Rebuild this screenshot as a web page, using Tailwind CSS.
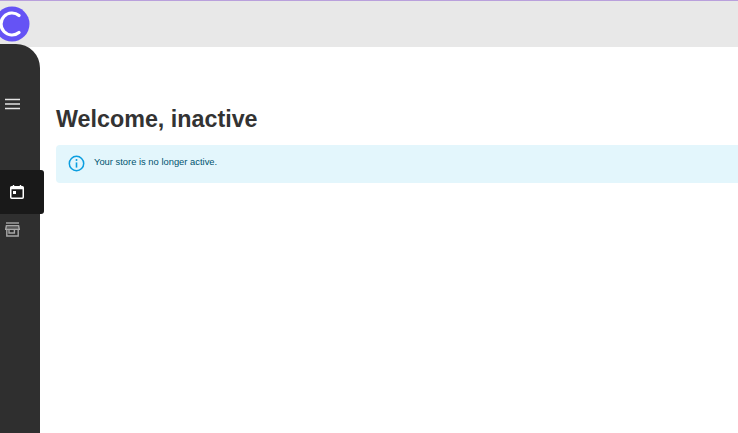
<!DOCTYPE html>
<html lang="en">

<head>
  <meta charset="UTF-8">
  <meta name="viewport" content="width=device-width, initial-scale=1.0">
  <title>Welcome</title>
  <script src="https://cdn.jsdelivr.net/npm/@tailwindcss/browser@4"></script>
</head>

<body class="bg-white h-[433px] overflow-hidden font-['Liberation_Sans',Arial,sans-serif]">
  <!-- top bar -->
  <header class="h-[47px] bg-[#e8e8e8] border-t border-[#b9a0dc] relative">
    <svg class="absolute left-[-6px] top-[5px]" width="36" height="36" viewBox="0 0 36 36">
      <circle cx="18" cy="18" r="17.5" fill="#6553f5" />
      <path d="M25 9.5 A11 11 0 1 0 25 26.5" fill="none" stroke="white" stroke-width="3.2" stroke-linecap="round" />
    </svg>
  </header>

  <div class="flex h-[386px]">
    <!-- sidebar -->
    <aside class="relative w-10 h-[389px] -mt-[3px] bg-[#2f2f2f] rounded-tr-[24px] shrink-0">
      <div class="absolute left-[5px] top-[54px]">
        <svg class="block" width="15" height="12" viewBox="0 0 15 12" fill="none" stroke="#e4e4e4" stroke-width="1.5">
          <path d="M0 1.5H15M0 6H15M0 10.5H15" />
        </svg>
      </div>
      <div class="absolute left-0 top-[126px] w-[44px] h-[44px] bg-[#191919] rounded-r-[3px] flex items-center">
        <svg class="ml-[10px]" width="14" height="14" viewBox="0 0 14 14" fill="none">
          <path d="M3.5 0V2M10.5 0V2" stroke="white" stroke-width="1.4" />
          <rect x="0.75" y="1.75" width="12.5" height="11.5" rx="1" stroke="white" stroke-width="1.5" />
          <rect x="0.75" y="1.75" width="12.5" height="2.5" fill="white" />
          <rect x="3" y="6" width="3" height="3" fill="white" />
        </svg>
      </div>
      <div class="absolute left-[5px] top-[178px]">
        <svg class="block" width="15" height="15" viewBox="0 0 15 15" fill="none" stroke="#a8a8a8" stroke-width="1.4">
          <path d="M1 1H14" />
          <path d="M1.4 3.6H13.6L14.3 7.4H0.7Z" fill="#a8a8a8" fill-opacity="0.35" />
          <path d="M1.8 7.4V14H13.2V7.4" />
          <path d="M4 7.4V11H9.4V7.4" />
        </svg>
      </div>
    </aside>

    <!-- main content -->
    <main class="flex-1 pl-4 pt-[57px] min-w-0">
      <h1 class="text-[23.3px] leading-[30px] font-bold text-[#333333]">Welcome, inactive</h1>
      <div class="mt-[11px] h-[38px] bg-[#e3f6fc] rounded-l-[4px] flex items-start pl-[12px]">
        <svg class="mt-[10px] shrink-0" width="17" height="17" viewBox="0 0 17 17" fill="none">
          <circle cx="8.5" cy="8.5" r="7.2" stroke="#0b9ee0" stroke-width="1.5" />
          <path d="M8.5 7.4V12.6" stroke="#0b9ee0" stroke-width="1.6" />
          <circle cx="8.5" cy="5" r="1" fill="#0b9ee0" />
        </svg>
        <p class="ml-[9px] mt-[10px] text-[9.4px] leading-[13px] text-[#00546f]">Your store is no longer active.</p>
      </div>
    </main>
  </div>
</body>

</html>
